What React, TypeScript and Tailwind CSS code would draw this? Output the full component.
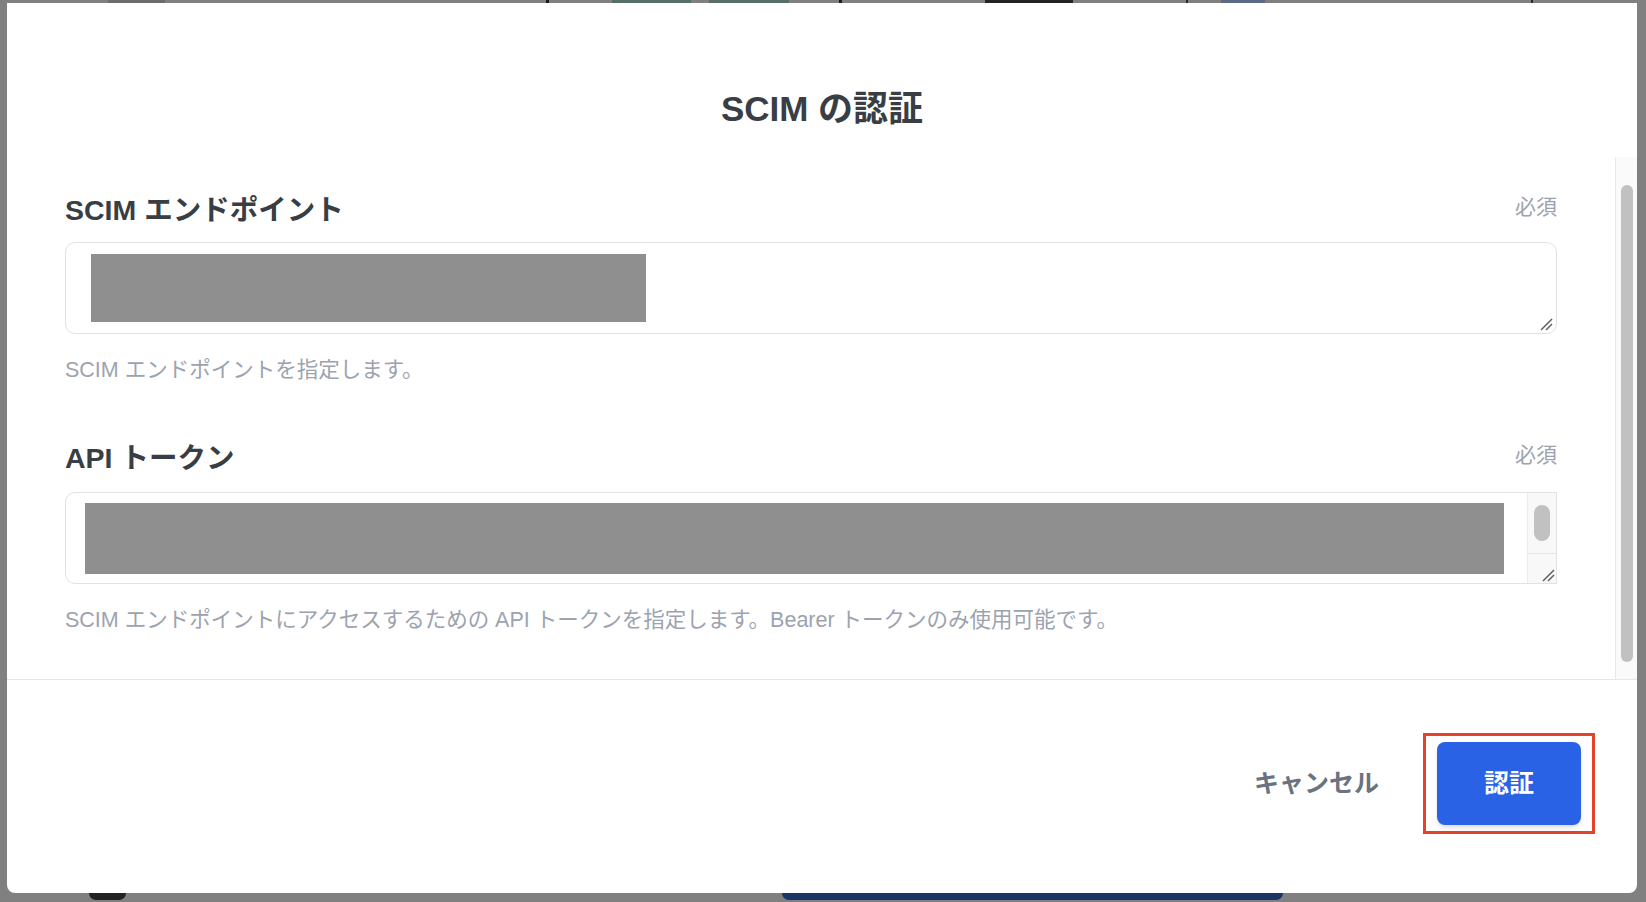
const Resize = ({ className = "" }: { className?: string }) => (
  <svg className={className} width="14" height="14" viewBox="0 0 14 14" fill="none">
    <path d="M2 13 L13 2" stroke="#5b5b5b" strokeWidth="1.4" />
    <path d="M7 13 L13 7" stroke="#5b5b5b" strokeWidth="1.4" />
  </svg>
);

const FieldLabel = ({ text }: { text: string }) => (
  <div className="flex items-start justify-between">
    <span className="text-[28.5px] leading-[36px] font-bold text-[#393e45]">{text}</span>
    <span className="text-[21px] leading-[30px] text-[#9ca3af]">必須</span>
  </div>
);

const Help = ({ text }: { text: string }) => (
  <p className="mt-[21px] text-[21.5px] leading-[30px] text-[#9ca3af]">{text}</p>
);

export default function App() {
  return (
    <div className="w-[1646px] h-[902px] bg-[#808080] flex flex-col overflow-hidden font-['Liberation_Sans','Noto_Sans_CJK_JP',sans-serif]">
      {/* page behind the overlay, only a sliver is visible */}
      <div className="h-[3px] flex shrink-0">
        <div className="ml-[108px] w-[57px] bg-[#6c6c6c]" />
        <div className="ml-[381px] w-[3px] bg-[#1a1a1a]" />
        <div className="ml-[63px] w-[79px] bg-[#566e68]" />
        <div className="ml-[18px] w-[80px] bg-[#566e68]" />
        <div className="ml-[50px] w-[3px] bg-[#1a1a1a]" />
        <div className="ml-[143px] w-[88px] bg-[#232323]" />
        <div className="ml-[113px] w-[2px] bg-[#2a2a2a]" />
        <div className="ml-[33px] w-[44px] bg-[#5d6a84]" />
        <div className="ml-[266px] w-[2px] bg-[#2a2a2a]" />
      </div>

      <div className="flex pl-[7px] shrink-0">
        <div className="w-[1630px] h-[890px] bg-white rounded-b-[8px] flex flex-col overflow-hidden">
          <div className="h-[154px] shrink-0 pt-[86px] text-center">
            <h1 className="text-[35px] leading-[40px] font-bold text-[#393e45]">SCIM の認証</h1>
          </div>

          <div className="h-[522px] shrink-0 flex">
            <div className="flex-1 px-[58px] pt-[35px]">
              <FieldLabel text="SCIM エンドポイント" />
              <div className="relative mt-[14px] h-[92px] rounded-[10px] border border-[#e2e2e2] pl-[25px] pt-[11px]">
                <div className="w-[555px] h-[68px] bg-[#8f8f8f]" />
                <Resize className="absolute right-[3px] bottom-[2px]" />
              </div>
              <Help text="SCIM エンドポイントを指定します。" />

              <div className="mt-[55px]">
                <FieldLabel text="API トークン" />
              </div>
              <div className="mt-[16px] h-[92px] rounded-l-[10px] border border-[#e2e2e2] flex overflow-hidden">
                <div className="flex-1 pl-[19px] pt-[10px] pr-[23px]">
                  <div className="h-[71px] bg-[#8f8f8f]" />
                </div>
                <div className="w-[29px] bg-[#f8f8f8] border-l border-[#ececec] flex flex-col">
                  <div className="flex-1 flex justify-center pt-[12px]">
                    <div className="w-[16px] h-[36px] rounded-full bg-[#c1c1c1]" />
                  </div>
                  <div className="h-[30px] border-t border-[#e6e6e6] relative">
                    <Resize className="absolute right-[1px] bottom-[1px]" />
                  </div>
                </div>
              </div>
              <Help text="SCIM エンドポイントにアクセスするための API トークンを指定します。Bearer トークンのみ使用可能です。" />
            </div>

            <div className="w-[22px] bg-[#fafafa] border-l border-[#e8e8e8] px-[5px] pt-[28px]">
              <div className="w-[12px] h-[477px] rounded-full bg-[#c1c1c1]" />
            </div>
          </div>

          <div className="flex-1 border-t border-[#e5e7eb] flex items-center justify-end pr-[42px] pb-[6px]">
            <button className="text-[25px] font-bold text-[#6b7280]">キャンセル</button>
            <div className="ml-[44px] border-[3px] border-[#e5412b] px-[11px] py-[6px]">
              <button className="w-[144px] h-[83px] rounded-[8px] bg-[#2962e4] text-white text-[25px] font-bold shadow-md">
                認証
              </button>
            </div>
          </div>
        </div>
      </div>

      <div className="h-[9px] flex shrink-0">
        <div className="ml-[89px] w-[37px] h-[7px] rounded-b-full bg-[#222222]" />
        <div className="ml-[656px] w-[501px] h-[7px] rounded-b-[8px] bg-[#1b3565]" />
      </div>
    </div>
  );
}
